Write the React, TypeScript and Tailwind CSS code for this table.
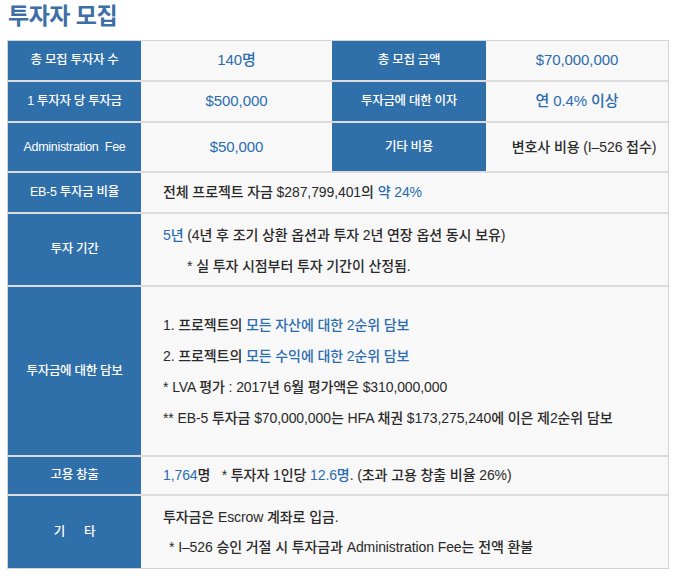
import React from "react";

const B = ({ children }: { children: React.ReactNode }) => (
  <span className="text-[#2b6cb0]">{children}</span>
);

const Head = ({ children, w = "w-[133px]" }: { children: React.ReactNode; w?: string }) => (
  <div
    className={`${w} shrink-0 bg-[#3070aa] text-white text-[12.5px] font-medium tracking-[-0.3px] flex items-center justify-center whitespace-pre`}
  >
    {children}
  </div>
);

export default function App() {
  return (
    <div
      className="w-[683px] h-[578px] bg-white text-[#2a2a2a]"
      style={{ fontFamily: '"Liberation Sans", "Noto Sans CJK KR", sans-serif' }}
    >
      <div className="pl-[8px] pt-[2px] h-[40px]">
        <h1 className="text-[23px] font-bold text-[#3d6fa6] tracking-[-0.5px] leading-[28px]">
          투자자 모집
        </h1>
      </div>
      <div className="ml-[7px] w-[662px] border border-[#d4d4d4] flex flex-col bg-[#f8f8f8] text-[14px] font-medium tracking-[-0.1px]">
        {/* Row 1 */}
        <div className="flex h-[41px] border-b-2 border-[#dcdcdc]">
          <Head>총 모집 투자자 수</Head>
          <div className="w-[191px] flex items-center justify-center text-[15px]">
            <B>140명</B>
          </div>
          <Head w="w-[154px]">총 모집 금액</Head>
          <div className="flex-1 flex items-center justify-center text-[15px]">
            <B>$70,000,000</B>
          </div>
        </div>
        {/* Row 2 */}
        <div className="flex h-[41px] border-b-2 border-[#dcdcdc]">
          <Head>1 투자자 당 투자금</Head>
          <div className="w-[191px] flex items-center justify-center text-[15px]">
            <B>$500,000</B>
          </div>
          <Head w="w-[154px]">투자금에 대한 이자</Head>
          <div className="flex-1 flex items-center justify-center text-[15px]">
            <B>연 0.4% 이상</B>
          </div>
        </div>
        {/* Row 3 */}
        <div className="flex h-[50px] border-b-2 border-[#dcdcdc]">
          <Head>{"Administration  Fee"}</Head>
          <div className="w-[191px] flex items-center justify-center text-[15px]">
            <B>$50,000</B>
          </div>
          <Head w="w-[154px]">기타 비용</Head>
          <div className="flex-1 flex items-center justify-center text-[14px] pl-[14px]">
            변호사 비용 (I–526 접수)
          </div>
        </div>
        {/* Row 4 */}
        <div className="flex h-[41px] border-b-2 border-[#dcdcdc]">
          <Head>EB-5 투자금 비율</Head>
          <div className="flex-1 flex items-center pl-[22px]">
            <span>
              전체 프로젝트 자금 $287,799,401의 <B>약 24%</B>
            </span>
          </div>
        </div>
        {/* Row 5 */}
        <div className="flex h-[73px] border-b-2 border-[#dcdcdc]">
          <Head>투자 기간</Head>
          <div className="flex-1 flex flex-col justify-center pl-[22px] leading-[31px] pt-[2px]">
            <div>
              <B>5년</B> (4년 후 조기 상환 옵션과 투자 2년 연장 옵션 동시 보유)
            </div>
            <div className="pl-[24px]">* 실 투자 시점부터 투자 기간이 산정됨.</div>
          </div>
        </div>
        {/* Row 6 */}
        <div className="flex h-[170px] border-b-2 border-[#dcdcdc]">
          <Head>투자금에 대한 담보</Head>
          <div className="flex-1 flex flex-col justify-center pl-[22px] leading-[31px] pt-[2px]">
            <div>
              1. 프로젝트의 <B>모든 자산에 대한 2순위 담보</B>
            </div>
            <div>
              2. 프로젝트의 <B>모든 수익에 대한 2순위 담보</B>
            </div>
            <div>* LVA 평가 : 2017년 6월 평가액은 $310,000,000</div>
            <div>
              ** EB-5 투자금 $70,000,000는 HFA 채권 $173,275,240에 이은 제2순위 담보
            </div>
          </div>
        </div>
        {/* Row 7 */}
        <div className="flex h-[39px] border-b-2 border-[#dcdcdc]">
          <Head>고용 창출</Head>
          <div className="flex-1 flex items-center pl-[22px] whitespace-pre">
            <span>
              <B>1,764</B>명{"   "}* 투자자 1인당 <B>12.6명</B>. (초과 고용 창출 비율 26%)
            </span>
          </div>
        </div>
        {/* Row 8 */}
        <div className="flex h-[72px]">
          <Head>{"기      타"}</Head>
          <div className="flex-1 flex flex-col justify-center pl-[22px] leading-[30px]">
            <div>투자금은 Escrow 계좌로 입금.</div>
            <div className="pl-[6px]">
              * I–526 승인 거절 시 투자금과 Administration Fee는 전액 환불
            </div>
          </div>
        </div>
      </div>
    </div>
  );
}
